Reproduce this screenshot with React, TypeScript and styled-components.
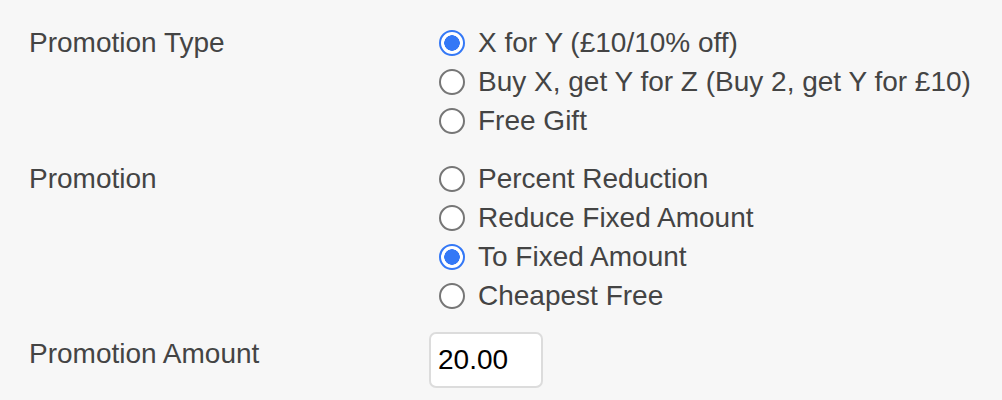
import React, { useState } from "react";
import styled, { createGlobalStyle } from "styled-components";

const GlobalStyle = createGlobalStyle`
  html, body {
    margin: 0;
    padding: 0;
    background: #f7f7f7;
  }
  body {
    font-family: "Liberation Sans", Arial, sans-serif;
    color: #444;
  }
`;

const Form = styled.form`
  padding: 23px 0 0 29px;
  display: flex;
  flex-direction: column;
  gap: 19px;
`;

const Row = styled.div`
  display: grid;
  grid-template-columns: 400px 1fr;
  align-items: start;
`;

const Label = styled.div`
  font-size: 28px;
  line-height: 39px;
`;

const Options = styled.div`
  display: flex;
  flex-direction: column;
  padding-left: 10px;
`;

const Option = styled.label`
  display: flex;
  align-items: center;
  gap: 13px;
  font-size: 28px;
  line-height: 39px;
  cursor: pointer;
`;

const Radio = styled.input`
  appearance: none;
  margin: 0;
  width: 26px;
  height: 26px;
  border-radius: 50%;
  border: 2px solid #767676;
  background: #fff;
  box-sizing: border-box;

  &:checked {
    border-color: #3478f6;
    background: radial-gradient(circle, #3478f6 0 7.5px, #fff 8px);
  }
`;

const AmountInput = styled.input`
  margin-top: -2px;
  width: 114px;
  height: 56px;
  box-sizing: border-box;
  border: 2px solid #dcdcdc;
  border-radius: 7px;
  background: #fff;
  padding: 0 7px;
  font-family: "Liberation Sans", Arial, sans-serif;
  font-size: 28px;
  color: #000;
  outline: none;
`;

const promotionTypes = [
  "X for Y (£10/10% off)",
  "Buy X, get Y for Z (Buy 2, get Y for £10)",
  "Free Gift",
];

const promotions = [
  "Percent Reduction",
  "Reduce Fixed Amount",
  "To Fixed Amount",
  "Cheapest Free",
];

const App: React.FC = () => {
  const [type, setType] = useState(promotionTypes[0]);
  const [promo, setPromo] = useState(promotions[2]);
  const [amount, setAmount] = useState("20.00");

  return (
    <>
      <GlobalStyle />
      <Form>
        <Row>
          <Label>Promotion Type</Label>
          <Options>
            {promotionTypes.map((t) => (
              <Option key={t}>
                <Radio
                  type="radio"
                  name="type"
                  checked={type === t}
                  onChange={() => setType(t)}
                />
                {t}
              </Option>
            ))}
          </Options>
        </Row>
        <Row>
          <Label>Promotion</Label>
          <Options>
            {promotions.map((p) => (
              <Option key={p}>
                <Radio
                  type="radio"
                  name="promo"
                  checked={promo === p}
                  onChange={() => setPromo(p)}
                />
                {p}
              </Option>
            ))}
          </Options>
        </Row>
        <Row>
          <Label>Promotion Amount</Label>
          <AmountInput
            value={amount}
            onChange={(e) => setAmount(e.target.value)}
          />
        </Row>
      </Form>
    </>
  );
};

export default App;
